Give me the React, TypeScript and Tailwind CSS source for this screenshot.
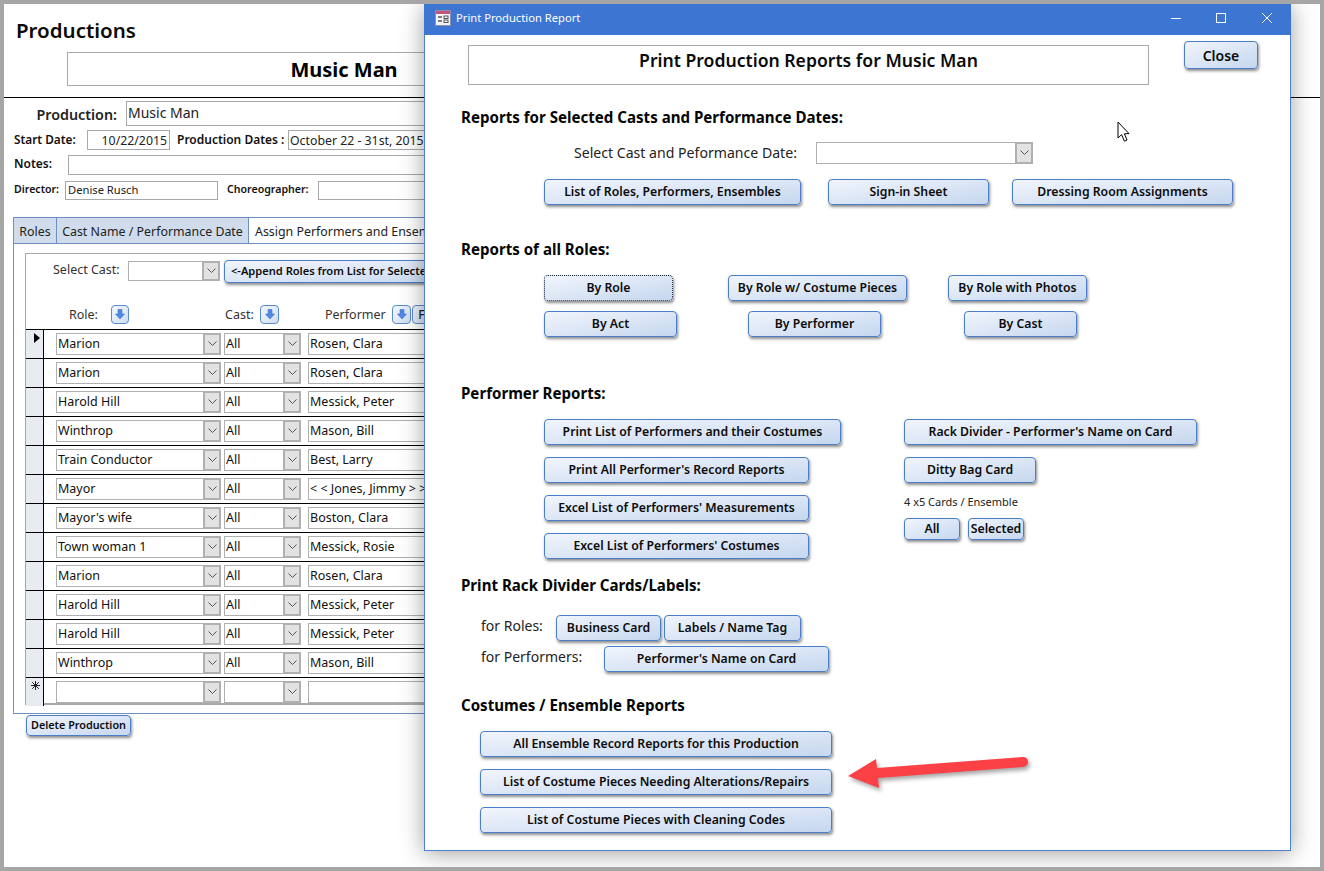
import React from "react";

const ui = "font-['Open_Sans','Noto_Sans',sans-serif]";

function Btn({ w, h = "h-[26px]", ml, text, size = "text-[12.25px]", extra = "", border = "border-solid border-[#4a7ec6]" }: { w: string; h?: string; ml?: string; text: string; size?: string; extra?: string; border?: string }) {
  return (
    <div className={`${w} ${h} ${ml ?? ""} ${size} ${extra} ${border} shrink-0 flex items-center justify-center whitespace-nowrap overflow-hidden rounded-[4px] border bg-gradient-to-br from-[#f1f5fc] to-[#c6d7ef] shadow-[1px_2px_3px_rgba(0,0,0,0.45)] font-semibold text-[#0c0c0c]`}>
      {text}
    </div>
  );
}

function Chevron() {
  return (
    <svg width="9" height="6" viewBox="0 0 9 6" fill="none" stroke="#555" strokeWidth="1">
      <path d="M0.5 0.5 L4.5 4.5 L8.5 0.5" />
    </svg>
  );
}

function Combo({ w, text, h = "h-[22px]" }: { w: string; text?: string; h?: string }) {
  return (
    <div className={`${w} ${h} shrink-0 flex border border-[#b0b0b0] bg-white`}>
      <div className="flex-1 min-w-0 pl-[1px] text-[12.5px] leading-[20px] text-[#111] whitespace-nowrap overflow-hidden">{text}</div>
      <div className="w-[18px] -my-px -mr-px border-2 border-[#b0b0b0] bg-[#e2e2e2] flex items-center justify-center">
        <Chevron />
      </div>
    </div>
  );
}

function SortBtn({ w = "w-[18px]", label }: { w?: string; label?: string }) {
  return (
    <div className={`${w} h-[19px] shrink-0 flex items-center justify-center rounded-[4px] border border-[#5a8ad0] bg-gradient-to-br from-[#f3f7fd] to-[#cfdef2] text-[12px] font-medium text-[#222]`}>
      {label ?? (
        <svg width="10" height="11" viewBox="0 0 10 11">
          <path d="M3 0.5 H7 V5 H9.5 L5 10 L0.5 5 H3 Z" fill="#4f8ae4" stroke="#2f66bd" strokeWidth="0.5" />
        </svg>
      )}
    </div>
  );
}

const rows: [string, string, string][] = [
  ["Marion", "All", "Rosen, Clara"],
  ["Marion", "All", "Rosen, Clara"],
  ["Harold Hill", "All", "Messick, Peter"],
  ["Winthrop", "All", "Mason, Bill"],
  ["Train Conductor", "All", "Best, Larry"],
  ["Mayor", "All", "< < Jones, Jimmy > >"],
  ["Mayor's wife", "All", "Boston, Clara"],
  ["Town woman 1", "All", "Messick, Rosie"],
  ["Marion", "All", "Rosen, Clara"],
  ["Harold Hill", "All", "Messick, Peter"],
  ["Harold Hill", "All", "Messick, Peter"],
  ["Winthrop", "All", "Mason, Bill"],
];

function Row({ role, cast, perf, marker }: { role?: string; cast?: string; perf?: string; marker?: React.ReactNode }) {
  return (
    <div className="flex h-[29px] border-t border-black">
      <div className="w-[18px] shrink-0 bg-[#e8ecf2] border-r border-black relative">{marker}</div>
      <div className="ml-[12px] mt-[3px] flex">
        <Combo w="w-[165px]" text={role} />
        <div className="w-[3px]" />
        <Combo w="w-[77px]" text={cast} />
        <div className="w-[7px]" />
        <div className="w-[200px] h-[22px] border border-[#b0b0b0] pl-[1px] text-[12.5px] leading-[20px] text-[#111] whitespace-nowrap overflow-hidden">{perf}</div>
      </div>
    </div>
  );
}

function Field({ w, ml, h, text, cls = "" }: { w: string; ml?: string; h: string; text?: string; cls?: string }) {
  return <div className={`${w} ${ml ?? ""} ${h} ${cls} shrink-0 border border-[#a9a9a9] px-[2px] whitespace-nowrap overflow-hidden text-[#222]`}>{text}</div>;
}

function Heading({ text, mt, ml = "ml-[36px]" }: { text: string; mt: string; ml?: string }) {
  return <div className={`${mt} ${ml} h-[20px] text-[15.1px] leading-[20px] font-bold text-[#050505] whitespace-nowrap`}>{text}</div>;
}

export default function App() {
  return (
    <div className={`w-[1324px] h-[871px] bg-[#a6a6a6] p-[4px] ${ui}`}>
      <div className="relative w-full h-full bg-white overflow-hidden">
        {/* Back form */}
        <div className="pt-[14px]">
          <div className="ml-[12px] h-[24px] text-[20.5px] leading-[24px] font-semibold text-[#0a0a0a]">Productions</div>
          <div className="ml-[63px] mt-[10px] w-[554px] h-[34px] border border-[#a9a9a9] flex items-center justify-center pt-[2px] text-[20px] font-bold text-black">Music Man</div>
          <div className="mt-[11px] h-px bg-black" />
          <div className="mt-[3px] flex h-[25px]">
            <div className="w-[113px] text-right text-[14.3px] leading-[28px] font-semibold text-[#222]">Production:</div>
            <Field w="w-[500px]" ml="ml-[9px]" h="h-[25px]" text="Music Man" cls="text-[14px] leading-[21px] !px-[1px]" />
          </div>
          <div className="mt-[4px] flex h-[20px] text-[11.8px] leading-[19px] font-semibold text-[#111]">
            <div className="ml-[10px] w-[73px]">Start Date:</div>
            <Field w="w-[83px]" h="h-[20px]" text="10/22/2015" cls="text-right text-[12.3px] font-normal" />
            <div className="ml-[7px] w-[111px] whitespace-nowrap text-[12px]">Production Dates :</div>
            <Field w="w-[260px]" h="h-[20px]" text="October 22 - 31st, 2015" cls="text-[12.3px] font-normal !px-[1px]" />
          </div>
          <div className="mt-[5px] flex h-[20px] text-[12px] leading-[18px] font-semibold text-[#111]">
            <div className="ml-[10px] w-[54px]">Notes:</div>
            <Field w="w-[500px]" h="h-[20px]" />
          </div>
          <div className="mt-[6px] flex h-[19px] text-[10.6px] leading-[16px] font-semibold text-[#111]">
            <div className="ml-[10px] w-[51px]">Director:</div>
            <Field w="w-[153px]" h="h-[19px]" text="Denise Rusch" cls="font-normal text-[11.2px]" />
            <div className="ml-[9px] w-[91px]">Choreographer:</div>
            <Field w="w-[200px]" h="h-[19px]" />
          </div>
          {/* Tabs */}
          <div className="mt-[17px] ml-[9px] flex h-[27px] text-[12.4px] leading-[27px] text-[#222]">
            <div className="w-[44px] text-center bg-[#d0dcec] border border-[#6f8fc0]">Roles</div>
            <div className="w-[193px] -ml-px text-center bg-[#d0dcec] border border-[#6f8fc0]">Cast Name / Performance Date</div>
            <div className="w-[300px] pl-[6px] border-t border-r border-[#6f8fc0] whitespace-nowrap">Assign Performers and Ensembles</div>
          </div>
          <div className="-mt-px ml-[9px] w-[600px] h-[471px] border border-[#6f8fc0] pt-[9px] pl-[11px]">
            <div className="w-[580px] h-[452px] border border-[#a9a9a9] border-b-2 text-[12.5px] text-[#333]">
              <div className="flex h-[51px] pt-[7px]">
                <div className="ml-[27px] w-[75px] leading-[18px]">Select Cast:</div>
                <div className="w-[92px] h-[20px] flex border border-[#b0b0b0]">
                  <div className="flex-1" />
                  <div className="w-[18px] -my-px -mr-px border-2 border-[#b0b0b0] bg-[#e2e2e2] flex items-center justify-center"><Chevron /></div>
                </div>
                <Btn w="w-[300px]" h="h-[23px]" ml="ml-[4px] -mt-px" text="<-Append Roles from List for Selected Cast" size="text-[11.1px]" extra="!justify-start pl-[6px]" />
              </div>
              <div className="flex h-[24px] items-start">
                <div className="ml-[43px] w-[42px] leading-[20px]">Role:</div>
                <SortBtn />
                <div className="ml-[96px] w-[35px] leading-[20px]">Cast:</div>
                <SortBtn w="w-[19px]" />
                <div className="ml-[46px] w-[67px] leading-[20px]">Performer</div>
                <SortBtn w="w-[19px]" />
                <SortBtn w="w-[19px] ml-[1px]" label="F" />
              </div>
              {rows.map((r, i) => (
                <Row
                  key={i}
                  role={r[0]}
                  cast={r[1]}
                  perf={r[2]}
                  marker={i === 0 ? <div className="mt-[3px] ml-[8px] w-0 h-0 border-y-[5px] border-y-transparent border-l-[6px] border-l-black" /> : undefined}
                />
              ))}
              <Row
                marker={
                  <svg className="ml-[5px] mt-[3px]" width="9" height="9" viewBox="0 0 9 9" stroke="#222" strokeWidth="1">
                    <path d="M4.5 0 V9 M0 4.5 H9 M1.2 1.2 L7.8 7.8 M7.8 1.2 L1.2 7.8" />
                  </svg>
                }
              />
            </div>
          </div>
          <Btn w="w-[105px]" h="h-[21px]" ml="ml-[22px] mt-px" text="Delete Production" size="text-[10.8px]" />
        </div>

        {/* Print Production Report window */}
        <div className="absolute left-[420px] top-0 w-[867px] h-[847px] bg-white border border-t-0 border-[#4a80d8] shadow-[0_2px_22px_rgba(0,0,0,0.38)]">
          <div className="flex items-start pt-[6px] h-[31px] -mx-px bg-[#3d75d3] text-white">
            <svg className="ml-[11px]" width="16" height="16" viewBox="0 0 16 16">
              <rect x="0.5" y="0.5" width="15" height="15" fill="#f4f4f8" stroke="#8b8fa8" />
              <rect x="1" y="1" width="14" height="3" fill="#c2557d" />
              <path d="M3 7h4M3 11h4" stroke="#555" strokeWidth="1.4" />
              <rect x="9" y="6" width="4" height="2.5" fill="none" stroke="#555" />
              <rect x="9" y="10" width="4" height="2.5" fill="none" stroke="#555" />
            </svg>
            <div className="ml-[5px] text-[11.2px] leading-[16px]">Print Production Report</div>
            <div className="ml-auto mt-[3px] flex items-center">
              <svg width="10" height="10" viewBox="0 0 10 10" stroke="#fff"><path d="M0 5.5 H10" /></svg>
              <svg className="ml-[35px]" width="10" height="10" viewBox="0 0 10 10" fill="none" stroke="#fff"><rect x="0.5" y="0.5" width="9" height="9" /></svg>
              <svg className="ml-[36px] mr-[19px]" width="10" height="10" viewBox="0 0 10 10" fill="none" stroke="#fff"><path d="M0 0 L10 10 M10 0 L0 10" /></svg>
            </div>
          </div>

          <div className="flex items-start pt-[6px]">
            <div className="ml-[43px] mt-[4px] w-[681px] h-[40px] border border-[#a9a9a9] flex items-start justify-center text-[17.6px] leading-[28px] font-semibold text-[#0a0a0a]">Print Production Reports for Music Man</div>
            <Btn w="w-[74px]" h="h-[28px]" ml="ml-[35px]" text="Close" size="text-[14px]" />
          </div>

          <Heading text="Reports for Selected Casts and Performance Dates:" mt="mt-[22px]" />
          <div className="mt-[15px] flex h-[22px]">
            <div className="ml-[149px] w-[242px] text-[14.1px] leading-[22px] text-[#222] whitespace-nowrap">Select Cast and Peformance Date:</div>
            <Combo w="w-[217px]" />
          </div>
          <div className="mt-[15px] flex">
            <Btn w="w-[257px]" ml="ml-[119px]" text="List of Roles, Performers, Ensembles" />
            <Btn w="w-[161px]" ml="ml-[27px]" text="Sign-in Sheet" />
            <Btn w="w-[221px]" ml="ml-[23px]" text="Dressing Room Assignments" />
          </div>

          <Heading text="Reports of all Roles:" mt="mt-[34px]" />
          <div className="mt-[16px] flex">
            <Btn w="w-[129px]" ml="ml-[119px]" text="By Role" border="border-dotted border-[#1d2a44]" />
            <Btn w="w-[179px]" ml="ml-[55px]" text="By Role w/ Costume Pieces" />
            <Btn w="w-[139px]" ml="ml-[41px]" text="By Role with Photos" />
          </div>
          <div className="mt-[10px] flex">
            <Btn w="w-[133px]" ml="ml-[119px]" text="By Act" />
            <Btn w="w-[133px]" ml="ml-[71px]" text="By Performer" />
            <Btn w="w-[113px]" ml="ml-[83px]" text="By Cast" />
          </div>

          <Heading text="Performer Reports:" mt="mt-[46px]" />
          <div className="mt-[16px] flex items-start">
            <div className="ml-[119px] w-[360px] flex flex-col gap-[12px]">
              <Btn w="w-[297px]" text="Print List of Performers and their Costumes" />
              <Btn w="w-[265px]" text="Print All Performer's Record Reports" />
              <Btn w="w-[265px]" text="Excel List of Performers' Measurements" />
              <Btn w="w-[265px]" text="Excel List of Performers' Costumes" />
            </div>
            <div className="flex flex-col">
              <Btn w="w-[293px]" text="Rack Divider - Performer's Name on Card" />
              <Btn w="w-[132px]" ml="mt-[12px]" text="Ditty Bag Card" />
              <div className="mt-[11px] h-[16px] text-[11px] leading-[16px] text-[#222]">4 x5 Cards / Ensemble</div>
              <div className="mt-[8px] flex">
                <Btn w="w-[56px]" h="h-[22px]" text="All" />
                <Btn w="w-[56px]" h="h-[22px]" ml="ml-[8px]" text="Selected" />
              </div>
            </div>
          </div>

          <Heading text="Print Rack Divider Cards/Labels:" mt="mt-[16px]" />
          <div className="mt-[20px] flex">
            <div className="ml-[56px] w-[75px] text-[14px] leading-[22px] text-[#222]">for Roles:</div>
            <Btn w="w-[105px]" text="Business Card" />
            <Btn w="w-[137px]" ml="ml-[3px]" text="Labels / Name Tag" />
          </div>
          <div className="mt-[5px] flex">
            <div className="ml-[56px] w-[123px] text-[14px] leading-[22px] text-[#222]">for Performers:</div>
            <Btn w="w-[225px]" text="Performer's Name on Card" />
          </div>

          <Heading text="Costumes / Ensemble Reports" mt="mt-[23px]" />
          <div className="mt-[16px] ml-[55px] flex flex-col gap-[12px]">
            <Btn w="w-[352px]" text="All Ensemble Record Reports for this Production" />
            <Btn w="w-[352px]" text="List of Costume Pieces Needing Alterations/Repairs" />
            <Btn w="w-[352px]" text="List of Costume Pieces with Cleaning Codes" />
          </div>

          {/* Red annotation arrow */}
          <svg className="absolute left-[410px] top-[745px] drop-shadow-[2px_3px_2px_rgba(0,0,0,0.35)]" width="200" height="50" viewBox="0 0 200 50" fill="none">
            <path d="M13 27 L41 10 L42 19 L188 8 Q193 8 193 13 Q193 17 188 18 L43 29 L44 39 Z" fill="#fb4146" />
          </svg>

          {/* Mouse pointer */}
          <svg className="absolute left-[692px] top-[117px]" width="14" height="22" viewBox="0 0 14 22">
            <path d="M1 1 V17 L4.6 13.6 L7.4 20.2 L10 19 L7.4 12.8 L12 12.6 Z" fill="#fff" stroke="#000" strokeWidth="1" />
          </svg>
        </div>
      </div>
    </div>
  );
}
